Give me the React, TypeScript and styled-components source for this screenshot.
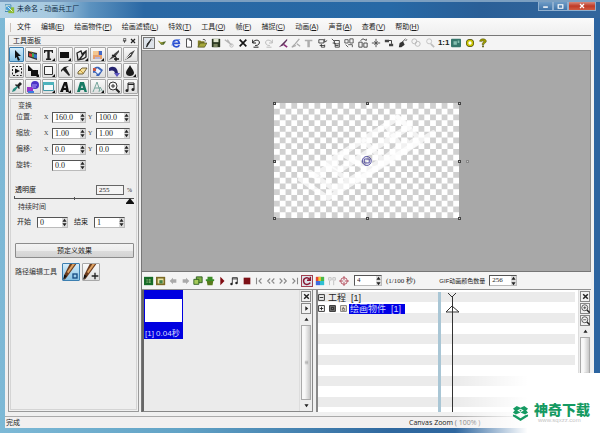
import React from "react";
import styled, { createGlobalStyle, css } from "styled-components";

const Global = createGlobalStyle`
  * { box-sizing: border-box; }
  body { margin: 0; background: #fff; color: #222; font: 7px/10px "Liberation Sans", "Noto Sans CJK SC", sans-serif; }
  button, input { font: inherit; color: inherit; margin: 0; padding: 0; }
  svg { display: block; flex: none; }
`;

const sans = `"Liberation Sans", "Noto Sans CJK SC", sans-serif`;
const serif = `"Liberation Serif", "Noto Sans CJK SC", serif`;

/* ---------- window ---------- */
const Window = styled.div`
  position: relative;
  display: flex;
  flex-direction: column;
  height: 100vh;
  overflow: hidden;
  background: linear-gradient(90deg, #7db9d6 0, #62a3c6 30%, #2f689f 65%, #2c64a0 100%);
`;
const TitleBar = styled.header`
  display: flex;
  align-items: flex-start;
  height: 18px;
  padding-left: 5px;
  border-top: 2px solid #7b9fc1;
  background: linear-gradient(90deg, #b4d3e6 0, #a5c8df 9%, #5c92bf 15%, #2a68a4 24%, #2769a6 65%, #2a5f97 80%, #33669c 100%);
`;
const Title = styled.h1`
  flex: 1;
  display: flex;
  align-items: center;
  gap: 2px;
  margin: 1px 0 0;
  font: 7px/12px ${sans};
  color: #0c2a42;
`;
const WinButton = styled.button<{ $close?: boolean }>`
  display: grid;
  place-items: center;
  width: ${(p) => (p.$close ? 28 : 15)}px;
  height: 9px;
  border: 1px solid #8fafcf;
  border-top: 0;
  color: #fff;
  background: ${(p) => (p.$close ? "linear-gradient(#d58a7c, #bf3a26 50%, #d05a40)" : "linear-gradient(#6f9cc6, #3f73a8)")};
`;
const WinButtons = styled.div`
  display: flex;
  padding-right: 4px;
`;
const Client = styled.div`
  flex: 1;
  min-height: 0;
  display: flex;
  flex-direction: column;
  margin: 0 6px 5px 5px;
  background: #f0f0f0;
`;
const MenuBar = styled.nav`
  display: flex;
  align-items: center;
  height: 17px;
  padding: 1px 0 0 5px;
  background: linear-gradient(#fafafa, #efefef);
`;
const Grip = styled.i`
  width: 1px;
  height: 9px;
  margin-right: 1px;
  background: #c9c0b8;
`;
const MenuItem = styled.button`
  border: 0;
  padding: 0 5px;
  background: none;
  white-space: nowrap;
  color: #1c1c1c;
`;
const Main = styled.div`
  flex: 1;
  min-height: 0;
  display: flex;
  padding: 0 3px 0 3px;
`;

/* ---------- left panel ---------- */
const SidePanel = styled.aside`
  display: flex;
  flex-direction: column;
  width: 131px;
  margin-right: 2px;
  border: 1px solid #9a9a9a;
  border-top-color: #c4c4c4;
`;
const PanelHead = styled.div`
  display: flex;
  align-items: center;
  height: 10px;
  gap: 3px;
  padding: 0 2px 0 4px;
  border-bottom: 1px solid #bbb;
  h2 { flex: 1; margin: 0; font: 7px/9px ${sans}; }
`;
const PlainButton = styled.button`
  display: grid;
  place-items: center;
  border: 0;
  background: none;
`;
const ToolGrid = styled.div`
  display: grid;
  grid-template-columns: repeat(8, 1fr);
  grid-auto-rows: 15px;
  gap: 1px;
  padding: 1px 0 1px;
  border-bottom: 1px solid #9c9c9c;
`;
const pressed = css`
  border-color: #3c7fb1;
  background: linear-gradient(#d5edfb, #88c2e4);
`;
const ToolButton = styled.button<{ $on?: boolean }>`
  display: grid;
  place-items: center;
  border: 1px solid #a8a8a8;
  border-radius: 1px;
  background: linear-gradient(#fafafa, #dedede);
  ${(p) => p.$on && pressed}
`;
const Properties = styled.div`
  flex: 1;
  display: flex;
  flex-direction: column;
  margin: 2px 1px 1px 1px;
  border: 1px solid #d4d4d4;
  background: #eee;
  padding: 4px 2px 0 3px;
`;
const Legend = styled.div`
  padding-left: 4px;
  line-height: 6px;
  color: #333;
`;
const FieldRow = styled.div`
  display: grid;
  grid-template-columns: 28px 44px 44px;
  align-items: center;
  height: 16px;
  padding-left: 2px;
  color: #3a3a3a;
`;
const RowName = styled.span`
  font-size: 7px;
  white-space: nowrap;
`;
const Field = styled.label`
  display: flex;
  align-items: center;
  justify-content: space-between;
  width: 42px;
  font: 6px/10px ${serif};
`;
const SpinBox = styled.span<{ $w: number }>`
  display: flex;
  align-items: stretch;
  width: ${(p) => p.$w}px;
  height: 11px;
  margin-left: auto;
  border: 1px solid #555;
  border-right-color: #bbb;
  border-bottom-color: #bbb;
  background: #fff;
  input {
    flex: 1;
    width: 0;
    min-width: 0;
    border: 0;
    padding-left: 2px;
    background: none;
    font: 8px/9px ${serif};
    color: #222;
    outline: 0;
  }
`;
const Steps = styled.span`
  display: flex;
  flex-direction: column;
  width: 5px;
  button { flex: 1; min-height: 0; display: grid; place-items: center; border: 0; background: #dcdcdc; }
`;
const OpacityRow = styled.div`
  display: flex;
  align-items: center;
  gap: 3px;
  height: 11px;
  margin: 11px 2px 0 1px;
  label { flex: 1; color: #111; }
  input { width: 28px; height: 10px; border: 1px solid #666; padding-left: 2px; background: #f4f4f4; font: 7px/8px ${serif}; }
  span { font: 6px/8px ${serif}; }
`;
const Slider = styled.input`
  appearance: none;
  width: 120px;
  height: 9px;
  background: linear-gradient(#555, #555) 0 3px / 100% 1px no-repeat, linear-gradient(#555, #555) 0 1px / 1px 3px no-repeat,
    linear-gradient(#555, #555) 50% 2px / 1px 3px no-repeat;
  &::-webkit-slider-thumb {
    appearance: none;
    width: 8px;
    height: 9px;
    background: #111;
    clip-path: polygon(50% 35%, 100% 90%, 100% 100%, 0 100%, 0 90%);
  }
`;
const TimeRow = styled.div`
  display: flex;
  align-items: center;
  gap: 6px;
  height: 12px;
  margin-top: 6px;
  padding-left: 3px;
  label { display: flex; align-items: center; gap: 6px; white-space: nowrap; }
`;
const WideButton = styled.button`
  height: 15px;
  margin: 15px 0 0 1px;
  border: 1px solid #8c8c8c;
  border-radius: 1px;
  background: linear-gradient(#f3f3f3, #ececec 50%, #dcdcdc 50%, #d3d3d3);
`;
const PathRow = styled.div`
  display: flex;
  align-items: center;
  gap: 2px;
  margin-top: 5px;
  padding-left: 1px;
  span { width: 45px; white-space: nowrap; color: #333; font-size: 7px; }
  button { width: 18px; height: 18px; }
`;

/* ---------- right side ---------- */
const Work = styled.section`
  flex: 1;
  min-width: 0;
  display: flex;
  flex-direction: column;
  border-left: 1px solid #777;
`;
const Toolbar = styled.div<{ $h: number; $w: number }>`
  display: flex;
  align-items: center;
  height: ${(p) => p.$h}px;
  padding-left: 1px;
  background: #f4f4f4;
  border-top: 1px solid #777;
  border-bottom: 1px solid #909090;
  > div { display: flex; justify-content: space-between; align-items: center; width: ${(p) => p.$w}px; }
`;
const IconButton = styled.button<{ $edge?: string }>`
  display: grid;
  place-items: center;
  width: 12px;
  height: 12px;
  border: 1px solid ${(p) => p.$edge ?? "transparent"};
  background: ${(p) => (p.$edge ? "#dde3ea" : "none")};
  font: bold 8px/10px ${sans};
`;
const Stage = styled.div`
  flex: 1;
  min-height: 0;
  display: grid;
  place-items: center;
  padding: 0 0 1px 1px;
  background: #a8a8a8;
  border-right: 1px solid #8b8b8b;
`;
const Artboard = styled.div`
  position: relative;
  width: 41.5%;
  aspect-ratio: 8 / 5;
  background: conic-gradient(#d0d0d0 25%, #fff 0 50%, #d0d0d0 0 75%, #fff 0) 0 0 / 6.25% 10%;
  > svg { width: 100%; height: 100%; }
`;
const Handle = styled.i<{ $x: number; $y: number; $soft?: boolean }>`
  position: absolute;
  left: ${(p) => p.$x}%;
  top: ${(p) => p.$y}%;
  width: 3px;
  height: 3px;
  margin: -1px 0 0 -1px;
  border: 1px solid ${(p) => (p.$soft ? "#888" : "#444")};
  background: #ccc;
`;
const CompactField = styled.label`
  display: flex;
  align-items: center;
  gap: 4px;
  margin-left: 4px;
  font: 7px/10px ${serif};
  white-space: nowrap;
  input { font-size: 7px; }
`;
const GifLabel = styled.span`
  margin-left: 20px;
  font: 6px/10px ${sans};
`;
const Bottom = styled.div`
  flex: none;
  display: flex;
  height: 122px;
  gap: 3px;
`;
const Frames = styled.div`
  display: flex;
  width: 171px;
  border: 1px solid #888;
  border-left: 2px solid #666;
  border-top: 0;
  background: #ebebeb;
`;
const FrameList = styled.div`
  flex: 1;
`;
const FrameCard = styled.figure`
  width: 39px;
  margin: 0;
  padding: 9px 1px 0;
  background: #0000e0;
  div { height: 23px; background: #fff; }
  figcaption { padding: 7px 0 0; font: 8px/10px ${sans}; color: #d8dcff; white-space: nowrap; overflow: hidden; }
`;
const Rail = styled.div`
  display: flex;
  flex-direction: column;
  align-items: stretch;
  gap: 1px;
  width: 13px;
  padding: 1px;
  background: #eee;
  border-left: 1px solid #ddd;
`;
const RailButton = styled.button<{ $flat?: boolean }>`
  display: grid;
  place-items: center;
  height: ${(p) => (p.$flat ? 9 : 11)}px;
  border: 1px solid ${(p) => (p.$flat ? "transparent" : "#888")};
  background: ${(p) => (p.$flat ? "none" : "#f2f2f2")};
`;
const ScrollThumb = styled.div`
  flex: 1;
  display: grid;
  place-items: center;
  border: 1px solid #aaa;
  background: linear-gradient(90deg, #f8f8f8 35%, #c8c8c8);
`;
const Timeline = styled.div`
  flex: 1;
  min-width: 0;
  display: flex;
  border-left: 2px solid #888;
  background: #fff;
`;
const stripes = `repeating-linear-gradient(#ebebeb 0 10px, #fff 10px 21px)`;
const Tree = styled.ul`
  width: 123px;
  margin: 2px 0 0;
  padding: 0;
  list-style: none;
  background: ${stripes};
  border-right: 3px solid #a9c6d5;
  font: 9px/10px ${sans};
  li { display: flex; align-items: center; gap: 4px; height: 11px; white-space: pre; }
  li > span { padding: 0 2px 0 1px; margin-left: -2px; }
`;
const Selected = styled.span`
  background: #0000e6;
  color: #cfd6ff;
  width: 56px;
`;
const Track = styled.div`
  flex: 1;
  margin: 2px 3px 0 0;
  padding-left: 3px;
  background: ${stripes};
  svg { height: 100%; }
`;
const StatusBar = styled.footer`
  display: flex;
  justify-content: space-between;
  align-items: center;
  height: 12px;
  margin-top: 4px;
  padding: 0 107px 0 1px;
  border-top: 1px solid #aaa;
  background: #f2f0f0;
  font: 7px/10px ${sans};
  span + span { font: 7px/10px "Open Sans", sans-serif; color: #222; }
  b { font-weight: 400; color: #777; }
`;
const Zoom = styled.span`
  width: 78px;
  white-space: nowrap;
`;
const Watermark = styled.div`
  position: absolute;
  right: 0;
  bottom: 0;
  display: flex;
  align-items: center;
  justify-content: flex-end;
  gap: 5px;
  width: 145px;
  height: 60px;
  padding: 18px 10px 0 0;
  background: linear-gradient(90deg, rgba(255, 255, 255, 0), #fff 50%);
  strong { display: block; font: 900 14px/14px "Noto Sans CJK SC", sans-serif; color: #159a62; }
  small { display: block; padding: 1px 0 0 4px; font: 6px/6px "Liberation Sans", sans-serif; color: #c4c4c4; }
`;

/* ---------- icons, drawn on a 12 x 12 grid ---------- */
const Sheet = <path d="M3 1h4l2 2v8H3z M7 1v2h2" fill="#fff" stroke="#333" />;
const Corner = <path d="M12 9v3H9z" fill="#111" />;
const icons: Record<string, React.ReactNode> = {
  arrow: <path d="M4 1l6 6H7l2 4-2 .7L5.500 8 4 9.500z" fill="#111" />,
  colors: <g><path d="M1 2l9 2v7L1 8z" fill="#333" /><path d="M2 4l3 1v3L2 7z" fill="#d73c30" /><path d="M5 4l2 .5v4L5 8z" fill="#44a455" /><path d="M7 5l3 .5v4L7 9z" fill="#3470bf" /><path d="M2 2l3 .5v1z" fill="#eac842" /></g>,
  text: <g><path d="M1 1h9v3H9L8.500 2.500H6.700V9.500H8V11H3V9.500h1.300v-7H2.500L2 4H1z" fill="#222" />{Corner}</g>,
  rect: <g><path d="M1 3h9v6H1z" fill="#111" />{Corner}</g>,
  poly: <g><path d="M1 4l4-2 1 3 4-3v6l-3 2-5 1z M3 11l7-9" fill="none" stroke="#222" strokeWidth="1.300" />{Corner}</g>,
  picture: <g><path d="M1 2h9v8H1z" fill="#e7a06c" /><path d="M1 2h5v4H1z" fill="#f3c790" /><path d="M7 2h3v4H7z" fill="#4166c4" /><path d="M3 8h5v2H3z" fill="#b8b4d2" />{Corner}</g>,
  penplus: <g><path d="M11 1L6 5 1 11l6-3 4-5z" fill="#444" /><path d="M4 6l4 2M8 8v4M6 10h5" stroke="#111" strokeWidth="1.300" /></g>,
  pen: <g><path d="M11 1L6 4 1 11l6-3z" fill="#444" /><path d="M2 10l5-5" stroke="#ddd" /></g>,
  select: <g><path d="M1.500 1.500h9v9h-9z" fill="none" stroke="#222" strokeDasharray="2 1.500" /><path d="M4 3.500L9 6 4 8.500z" fill="#111" /></g>,
  cursor: <g><path d="M1 0l6 6H1z M4 5h7v6H4z" fill="#111" />{Corner}</g>,
  square: <g><path d="M1.500 1.500h8v8h-8z" fill="#f7f7f7" stroke="#333" />{Corner}</g>,
  axe: <path d="M2 5l3-3 5-1-3 2 4 7-1 1-6-6-2 2z" fill="#222" />,
  eraser: <g><path d="M2 7l4-4h5L7 9H2z" fill="#f3df9a" stroke="#57451d" strokeWidth=".8" /><path d="M4 5l3 3" stroke="#c99737" /></g>,
  fill: <g><path d="M1 6c0-4 4-5 6-4l4 3-4 6H4c2-2-1-4-3-3z" fill="#3b64b8" /><path d="M5 3l4 3-3 3-3-3z" fill="#eef4ff" /><path d="M1 3h3v3H1z" fill="#c95846" /></g>,
  redoink: <g><path d="M1 3c5-3 9 0 9 6H7c0-4-3-4-6-3z" fill="#25246f" /><path d="M6 8h6l-3 4z" fill="#5b54bd" /></g>,
  drop: <g><path d="M6 0c1 3 4 5 4 8 0 4-8 4-8 0 0-3 3-5 4-8z" fill="#1b1b1b" />{Corner}</g>,
  dropper: <g><path d="M6 4l3-3 2 2-3 3 1 1-1 1-4-4 1-1z" fill="#222" /><path d="M1 11l1-3 4-3 1 1-3 4z" fill="#2d8d83" /></g>,
  shapes: <g><circle cx="8" cy="4" r="4" fill="#4c34c8" /><path d="M0 6h6v5H0z" fill="#9736c8" /><path d="M1 10h6v2H1z" fill="#3b7be0" /><path d="M5 4h5M5 6h4" stroke="#a99bf4" /></g>,
  window: <g><path d="M.5 1.500h10v8H.5z" fill="#f4fafb" stroke="#4297a5" /><path d="M0 1h11v3H0z" fill="#4db3bd" />{Corner}</g>,
  aBlack: <g><path d="M5 1h3l2 10H7l-.2-2H4.500L4 11H1z M6 4L5 7h2z" fill="#111" />{Corner}</g>,
  aGreen: <path d="M4 1h4l3 10H8.500l-.6-2H4.500l-.7 2H1z M6 4L5 7h2z" fill="#187b65" fillRule="evenodd" />,
  aSoft: <g><path d="M1 11L5 1l3 9M3 7h4M7 11l1-5 3 5" fill="none" stroke="#77a79d" />{Corner}</g>,
  zoom: <g><circle cx="5" cy="5" r="4" fill="#f5f5f5" stroke="#333" /><path d="M3 5h4M5 3v4" stroke="#333" /><path d="M8 8l3.500 3.500" stroke="#222" strokeWidth="2" /></g>,
  zoomout: <g><circle cx="5" cy="5" r="4" fill="#f5f5f5" stroke="#333" /><path d="M3 5h4" stroke="#333" /><path d="M8 8l3.500 3.500" stroke="#222" strokeWidth="2" /></g>,
  music: <g><path d="M4 9V2h6v6M4 3.500h6" fill="none" stroke="#222" /><circle cx="3" cy="9.500" r="1.500" fill="#222" /><circle cx="9" cy="8.500" r="1.500" fill="#222" /></g>,
  wand: <g><path d="M9 1L5 8l-2 3 1-4z" fill="#222" stroke="#222" /><path d="M9 1l1 2" stroke="#888" /></g>,
  bird: <g><path d="M1 3l4 2 6-1-3 4H5z" fill="#536b29" /><path d="M2 4l3 2h2" stroke="#c9bb3d" fill="none" /></g>,
  ie: <g><path d="M10 8.500C8 12 2.500 11 2.500 6.500S9.500 1 10 6.500H3.500" fill="none" stroke="#2b4ed0" strokeWidth="2" /><path d="M1 9c1-4 6-8 10-7" stroke="#4d78e6" fill="none" /></g>,
  page: Sheet,
  open: <g><path d="M1 3h3l1 1h4v2H4l-3 5z" fill="#807c25" /><path d="M4 6h8l-3 5H1z" fill="#a6a83c" stroke="#383a10" strokeWidth=".7" /><path d="M7 2c2-1 3 0 3 2" fill="none" stroke="#333" /></g>,
  save: <g><path d="M1 1h10v10H1z" fill="#27341d" /><path d="M3 1h6v4H3z" fill="#dce2ca" /><path d="M3 7h5v4H3z" fill="#7b8560" /></g>,
  cut: <g stroke="#b5b5b5" fill="none"><path d="M1 2l8 6M4 2l5 7" strokeWidth="1.500" /><circle cx="9" cy="9" r="2" /></g>,
  del: <path d="M2 2l8 8M10 2l-8 8" stroke="#151515" strokeWidth="2" />,
  undo: <path d="M2 2v4h4M2 6c2-5 9-4 8 0-.5 3-4 3-5 3M3 11h6" fill="none" stroke="#222" strokeWidth="1.200" />,
  redo: <path d="M10 2v4H6M10 6C8 1 1 2 2 6c.5 3 4 3 5 3M3 11h6" fill="none" stroke="#bdbdbd" strokeWidth="1.200" />,
  knife: <g><path d="M11 1L5 7 1 11l5-2 5-6z" fill="#5e315b" /><path d="M7 8l4 3" stroke="#8c2b78" strokeWidth="2" /></g>,
  dimknife: <path d="M10 1L5 7l-4 4 5-2M7 7l4 3" fill="none" stroke="#aaa" strokeWidth="1.500" />,
  dimtext: <path d="M1 2h9v2H7v7H4V4H1z" fill="#adadad" />,
  n1: <g fill="none" stroke="#333"><path d="M1 2h6v4H1zM2 9h6M8 1v4l3-2M4 7v4h4V8" /></g>,
  n2: <g fill="none" stroke="#333"><path d="M4 3h6v4H4zM1 1l3 3M2 6h3v5h5V7M5 9h4" /></g>,
  n3: <g fill="none" stroke="#444"><path d="M1 2h4v4H1zM7 1h4v5H7zM5 8h5v3M2 8l3 3" /></g>,
  n4: <g fill="none" stroke="#333"><path d="M1 5h4v6H1zM7 6h4v5H7zM3 3l3-2 4 2V1" /></g>,
  target: <path d="M6 1v10M1 6h10M4 4l4 4M8 4L4 8" stroke="#555" strokeWidth="1.200" />,
  steps: <g><path d="M1 2h5v3H1zM6 7h5v3H6z" fill="#444" /><path d="M6 3h3v4" fill="none" stroke="#222" /></g>,
  spray: <g><path d="M1 11l1-5 4-2 2 4-4 3z" fill="#333" /><path d="M5 5l4-4M9 3l2-1" stroke="#333" /></g>,
  dimrings: <g fill="none" stroke="#b5b5b5"><circle cx="4" cy="4" r="3" /><circle cx="8" cy="7" r="3" /></g>,
  dimzoom: <g fill="none" stroke="#bdbdbd"><circle cx="5" cy="4" r="3" /><path d="M7 7l4 4" strokeWidth="2" /></g>,
  screen: <g><rect x="0" y="1" width="12" height="10" rx="1" fill="#36776c" /><path d="M3 4h4v4H3zM8 3h2v3H8z" fill="#85bfb0" /></g>,
  ring: <g><circle cx="6" cy="6" r="4.800" fill="#4a4a00" /><circle cx="6" cy="6" r="4" fill="#c9c400" /><circle cx="6" cy="6" r="2" fill="#fff" /></g>,
  help: <g><path d="M2 4c0-4 8-4 8 0 0 2-3 2-3 4H5c0-3 2-3 2-4 0-1-2-1-2 0z" fill="#a1a000" stroke="#404000" strokeWidth=".6" /><path d="M5 9h2v2H5z" fill="#565600" /></g>,
  addframe: <g><path d="M0 1h11v10H0z" fill="#176d29" /><path d="M3 4h5v4H3z" fill="#a3d88e" /><path d="M5 3v6M2 6h7" stroke="#0f4c1b" /></g>,
  addimage: <g><path d="M0 1h11v10H0z" fill="#7b6a24" /><path d="M2 3h7v6H2z" fill="#e8e2a2" /><path d="M4 5h4v4H4z" fill="#428248" /></g>,
  back: <path d="M6 2L2 6l4 4V8h4V4H6z" fill="#aaa" />,
  fwd: <path d="M6 2l4 4-4 4V8H2V4h4z" fill="#aaa" />,
  copy: <g><path d="M4 1h7v7H4z" fill="#7fb044" stroke="#24571b" /><path d="M1 4h6v6H1z" fill="#a5cb5b" stroke="#24571b" /></g>,
  bin: <g><path d="M1 4h10v2H1zM3 1h6v3H3z" fill="#3c8d28" /><path d="M2 6h8l-1 5H3z" fill="#587b1d" /></g>,
  play: <path d="M4 1l5 5-5 5z" fill="#800c12" />,
  stop: <path d="M2 2h8v8H2z" fill="#7d1016" />,
  first: <path d="M3 2v8M9 3L6 6l3 3" fill="none" stroke="#888" strokeWidth="1.300" />,
  rew: <path d="M5 3L2 6l3 3M10 3L7 6l3 3" fill="none" stroke="#888" strokeWidth="1.300" />,
  ff: <path d="M2 3l3 3-3 3M7 3l3 3-3 3" fill="none" stroke="#888" strokeWidth="1.300" />,
  last: <path d="M9 2v8M3 3l3 3-3 3" fill="none" stroke="#888" strokeWidth="1.300" />,
  loop: <path d="M9 4C6 0 1 3 2 7c1 4 6 4 8 1M10 1v4H6" fill="none" stroke="#8b1530" strokeWidth="1.700" />,
  palette: <g><path d="M1 1h5v5H1z" fill="#e84534" /><path d="M6 1h5v5H6z" fill="#48b948" /><path d="M1 6h5v5H1z" fill="#3f6ce0" /><path d="M6 6h5v5H6z" fill="#30bfd4" /><path d="M4 1h3v5H4z" fill="#f1c835" /></g>,
  dots: <path d="M2 2h3v3H2zM7 2h3v3H7zM3 6v5M8 6v5" fill="none" stroke="#bbb" />,
  cross: <g fill="none" stroke="#af4050"><circle cx="6" cy="6" r="4" /><path d="M6 0v5M6 7v5M0 6h5M7 6h5" /></g>,
  close: <path d="M2 2l8 8M10 2l-8 8" stroke="#222" strokeWidth="2.500" />,
  pin: <path d="M4 1h5v6H4zM2 7h8M6 7v5" fill="none" stroke="#222" strokeWidth="1.500" />,
  right: <path d="M4 2l5 4-5 4z" fill="#222" />,
  up: <path d="M6 2l5 7H1z" fill="#222" />,
  down: <path d="M6 10l5-7H1z" fill="#222" />,
  lines: <path d="M2 3h8M2 6h8M2 9h8" stroke="#777" />,
  minus: <path d="M1 1h10v10H1zM3 6h6" fill="none" stroke="#222" strokeWidth="1.500" />,
  plus: <path d="M1 1h10v10H1zM3 6h6M6 3v6" fill="none" stroke="#222" strokeWidth="1.500" />,
  eye: <path d="M1 1h10v10H1zM4 4h4v4H4z" fill="#777" stroke="#222" strokeWidth="1.500" />,
  lock: <path d="M1 1h10v10H1zM4 6h4v3H4zM5 6V4h2" fill="#f3e9d9" stroke="#555" strokeWidth="1.200" />,
  min: <path d="M2 7h8" stroke="#fff" strokeWidth="2.500" />,
  max: <path d="M2 3h8v6H2z" fill="none" stroke="#fff" strokeWidth="2" />,
  x: <path d="M2 2l8 8M10 2l-8 8" stroke="#fff" strokeWidth="2.500" />,
  brushO: <g><path d="M5 0h5L5 7 2 11 1 12V8z" fill="#6a3b1e" /><path d="M7 0h2L4 7 3 6z" fill="#dea261" /><path d="M1 8l2 1-3 3z" fill="#111" /><rect x="7.500" y="7.500" width="3" height="3" fill="none" stroke="#174c83" /></g>,
  brushP: <g><path d="M5 0h5L5 7 2 11 1 12V8z" fill="#6a3b1e" /><path d="M7 0h2L4 7 3 6z" fill="#dea261" /><path d="M1 8l2 1-3 3z" fill="#111" /><path d="M9 6.500v5M6.500 9h5" stroke="#222" /></g>,
  app: <g><path d="M0 1h7v8H0z" fill="#f0f8e2" stroke="#2f79a9" /><path d="M4 4h7v7H4z" fill="#8dbb36" /><circle cx="4" cy="5" r="3" fill="#4ba0d7" /><path d="M3 3l6 6" stroke="#fff" /></g>,
};
const Icon = ({ name, size = 10 }: { name: string; size?: number }) => (
  <svg viewBox="0 0 12 12" width={size} height={size} aria-hidden="true">{icons[name]}</svg>
);

const menus = [["文件", ""], ["编辑", "E"], ["绘画物件", "P"], ["绘画滤镜", "L"], ["特效", "T"], ["工具", "O"], ["帧", "F"], ["捕捉", "C"], ["动画", "A"], ["声音", "A"], ["查看", "V"], ["帮助", "H"]];
const tools = "arrow colors text rect poly picture penplus pen select cursor square axe eraser fill redoink drop dropper shapes window aBlack aGreen aSoft zoom music".split(" ");
const mainIcons = "wand bird ie page open save cut del undo redo knife dimknife dimtext n1 n2 n3 n4 target steps spray dimrings dimzoom 1:1 screen ring help".split(" ");
const playIcons = "addframe addimage back fwd copy bin play music stop first rew ff last loop palette dots cross".split(" ");
const rows: [string, [string, string][]][] = [
  ["位置:", [["X", "160.0"], ["Y", "100.0"]]],
  ["缩放:", [["X", "1.00"], ["Y", "1.00"]]],
  ["偏移:", [["X", "0.0"], ["Y", "0.0"]]],
  ["旋转:", [["", "0.0"]]],
];
const handles = [[0, 0], [50, 0], [100, 0], [0, 50], [100, 50], [0, 100], [50, 100], [100, 100]];

const Spin = ({ value, w, name }: { value: string; w: number; name?: string }) => (
  <SpinBox $w={w}>
    <input defaultValue={value} aria-label={name} />
    <Steps>
      <button aria-label="增加"><Icon name="up" size={5} /></button>
      <button aria-label="减少"><Icon name="down" size={5} /></button>
    </Steps>
  </SpinBox>
);

const SideTools = () => (
  <SidePanel>
    <PanelHead>
      <h2>工具面板</h2>
      <PlainButton aria-label="固定"><Icon name="pin" size={5} /></PlainButton>
      <PlainButton aria-label="关闭"><Icon name="close" size={6} /></PlainButton>
    </PanelHead>
    <ToolGrid>
      {tools.map((t) => (
        <ToolButton key={t} aria-label={t} $on={t === "arrow"}><Icon name={t} size={12} /></ToolButton>
      ))}
    </ToolGrid>
    <Properties>
      <Legend>变换</Legend>
      {rows.map(([name, fields]) => (
        <FieldRow key={name}>
          <RowName>{name}</RowName>
          {fields.map(([axis, value]) => (
            <Field key={axis}>{axis}<Spin value={value} w={34} name={name + axis} /></Field>
          ))}
        </FieldRow>
      ))}
      <OpacityRow>
        <label htmlFor="opacity">透明度</label>
        <input id="opacity" defaultValue="255" />
        <span>%</span>
      </OpacityRow>
      <Slider type="range" min={0} max={255} defaultValue={255} aria-label="透明度" />
      <Legend>持续时间</Legend>
      <TimeRow>
        <label>开始<Spin value="0" w={31} name="开始" /></label>
        <label>结束<Spin value="1" w={31} name="结束" /></label>
      </TimeRow>
      <WideButton>预定义效果</WideButton>
      <PathRow>
        <span>路径编辑工具</span>
        <ToolButton $on aria-label="编辑路径"><Icon name="brushO" size={16} /></ToolButton>
        <ToolButton aria-label="添加路径点"><Icon name="brushP" size={16} /></ToolButton>
      </PathRow>
    </Properties>
  </SidePanel>
);

const Drawing = () => (
  <svg viewBox="0 0 186 117" aria-hidden="true">
    <g fill="none" stroke="#fff" strokeOpacity=".7" strokeLinecap="round" strokeLinejoin="round">
      <path d="M26 77l28 19L160 30M36 70l24 17 84-51M50 61l28 19 68-45M68 51l27 17 38-30M90 38l22 22M112 22l20 28M124 14l24 24" strokeWidth="5" />
      <path d="M54 60l70-45 12 9-70 43zM84 78l60-38M40 73l22-13" strokeWidth="6" />
    </g>
    <g fill="none" stroke="#504b9e"><circle cx="93" cy="58.500" r="4.500" /><path d="M90.500 56.500h5v4h-5z" /></g>
  </svg>
);

export default function App() {
  return (
    <Window>
      <Global />
      <TitleBar>
        <Title><Icon name="app" size={10} />未命名 - 动画兵工厂</Title>
        <WinButtons>
          <WinButton aria-label="最小化"><Icon name="min" size={7} /></WinButton>
          <WinButton aria-label="最大化"><Icon name="max" size={7} /></WinButton>
          <WinButton $close aria-label="关闭"><Icon name="x" size={6} /></WinButton>
        </WinButtons>
      </TitleBar>
      <Client>
        <MenuBar>
          <Grip />
          {menus.map(([label, key]) => (
            <MenuItem key={label}>{label}{key && <>(<u>{key}</u>)</>}</MenuItem>
          ))}
        </MenuBar>
        <Main>
          <SideTools />
          <Work>
            <Toolbar $h={16} $w={346}>
              <div>
                {mainIcons.map((n, i) => (
                  <IconButton key={n} aria-label={n} $edge={i === 0 ? "#777" : undefined}>
                    {n === "1:1" ? n : <Icon name={n} size={10} />}
                  </IconButton>
                ))}
              </div>
            </Toolbar>
            <Stage>
              <Artboard>
                <Drawing />
                {handles.map(([x, y]) => <Handle key={`${x}-${y}`} $x={x} $y={y} />)}
                <Handle $x={104} $y={50} $soft />
              </Artboard>
            </Stage>
            <Toolbar $h={19} $w={207}>
              <div>
                {playIcons.map((n) => (
                  <IconButton key={n} aria-label={n} $edge={n === "loop" ? "#a04050" : undefined}>
                    <Icon name={n} size={10} />
                  </IconButton>
                ))}
              </div>
              <CompactField><Spin value="4" w={28} name="延时" />(1/100 秒)</CompactField>
              <CompactField><GifLabel>GIF动画颜色数量</GifLabel><Spin value="256" w={28} name="GIF动画颜色数量" /></CompactField>
            </Toolbar>
            <Bottom>
              <Frames>
                <FrameList>
                  <FrameCard><div /><figcaption>[1] 0.04秒</figcaption></FrameCard>
                </FrameList>
                <Rail>
                  <RailButton aria-label="关闭"><Icon name="close" size={7} /></RailButton>
                  <RailButton aria-label="展开"><Icon name="right" size={7} /></RailButton>
                  <RailButton $flat aria-label="向上"><Icon name="up" size={5} /></RailButton>
                  <ScrollThumb><Icon name="lines" size={5} /></ScrollThumb>
                  <RailButton $flat aria-label="向下"><Icon name="down" size={5} /></RailButton>
                </Rail>
              </Frames>
              <Timeline>
                <Tree>
                  <li><Icon name="minus" size={7} /><span>工程  [1]</span></li>
                  <li>
                    <Icon name="plus" size={7} /><Icon name="eye" size={7} /><Icon name="lock" size={7} />
                    <Selected>绘画物件  [1]</Selected>
                  </li>
                </Tree>
                <Track>
                  <svg width="16" viewBox="0 0 16 120" preserveAspectRatio="xMidYMin slice" aria-hidden="true">
                    <path d="M4 1l4 4 4-4M8.500 5v115M8 14l-6 6h13z" fill="none" stroke="#333" />
                  </svg>
                </Track>
                <Rail>
                  <RailButton aria-label="关闭"><Icon name="close" size={7} /></RailButton>
                  <RailButton aria-label="放大"><Icon name="zoom" size={9} /></RailButton>
                  <RailButton aria-label="缩小"><Icon name="zoomout" size={9} /></RailButton>
                  <RailButton $flat aria-label="向上"><Icon name="up" size={5} /></RailButton>
                  <ScrollThumb><Icon name="lines" size={5} /></ScrollThumb>
                </Rail>
              </Timeline>
            </Bottom>
          </Work>
        </Main>
        <StatusBar>
          <span>完成</span>
          <Zoom>Canvas Zoom <b>( 100% )</b></Zoom>
        </StatusBar>
      </Client>
      <Watermark>
        <svg viewBox="0 0 18 18" width="17" height="17" aria-hidden="true">
          <path d="M1 5l4-3 4 2 4-2 4 3-2 2 2 2-3 2-5-2-5 2-3-2 2-2z M9 5L5.500 7 9 9l3.500-2z" fill="#159a62" fillRule="evenodd" />
          <path d="M1 11l3 1 5 3 5-3 3-1v2l-8 5-8-5z" fill="#159a62" />
          <circle cx="9" cy="7" r="1" fill="#159a62" />
        </svg>
        <div><strong>神奇下载</strong><small>www.sqxzz.com</small></div>
      </Watermark>
    </Window>
  );
}
